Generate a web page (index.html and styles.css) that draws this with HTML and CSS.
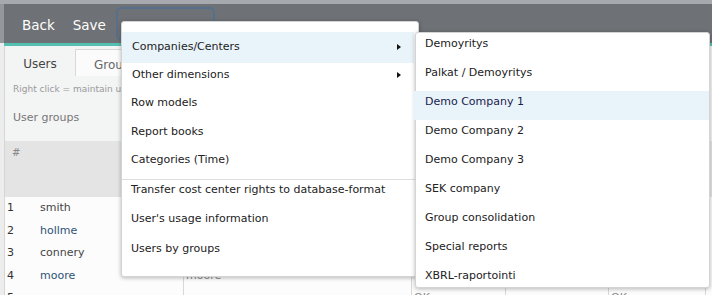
FILE: index.html
```html
<!DOCTYPE html>
<html>
<head>
<meta charset="utf-8">
<link rel="stylesheet" href="styles.css">
</head>
<body>
<div class="strip"></div>
<div class="frame">
  <header class="topbar">
    <button class="tb-btn">Back</button>
    <button class="tb-btn">Save</button>
    <button class="tb-btn tb-focus">Reports</button>
  </header>
  <div class="accent"></div>
  <main class="content">
    <nav class="tabs">
      <div class="tab">Users</div>
      <div class="tab tab-active">Groups</div>
    </nav>
    <p class="hint">Right click = maintain user rights</p>
    <h2 class="section">User groups</h2>
    <div class="grid">
      <div class="grid-head"><span class="hash">#</span></div>
      <div class="row"><span class="c-num">1</span><span class="c-name">smith</span><span class="c-2"></span><span class="c-3"></span><span class="c-4"></span><span class="c-5"></span></div>
      <div class="row"><span class="c-num">2</span><span class="c-name link">hollme</span><span class="c-2"></span><span class="c-3"></span><span class="c-4"></span><span class="c-5"></span></div>
      <div class="row"><span class="c-num">3</span><span class="c-name">connery</span><span class="c-2"></span><span class="c-3"></span><span class="c-4"></span><span class="c-5"></span></div>
      <div class="row"><span class="c-num">4</span><span class="c-name link">moore</span><span class="c-2 ghost">moore</span><span class="c-3"></span><span class="c-4"></span><span class="c-5"></span></div>
      <div class="row"><span class="c-num">5</span><span class="c-name"></span><span class="c-2"></span><span class="c-3 ghost">OK</span><span class="c-4"></span><span class="c-5 ghost">OK</span></div>
    </div>
  </main>
</div>

<ul class="menu menu-main">
  <li class="mi mi-sub mi-hover">Companies/Centers<span class="arrow"></span></li>
  <li class="mi mi-sub">Other dimensions<span class="arrow"></span></li>
  <li class="mi">Row models</li>
  <li class="mi">Report books</li>
  <li class="mi">Categories (Time)</li>
  <li class="sep"></li>
  <li class="mi mi-b">Transfer cost center rights to database-format</li>
  <li class="mi mi-b">User's usage information</li>
  <li class="mi mi-b">Users by groups</li>
</ul>

<ul class="menu menu-sub">
  <li class="si">Demoyritys</li>
  <li class="si">Palkat / Demoyritys</li>
  <li class="si si-hover">Demo Company 1</li>
  <li class="si">Demo Company 2</li>
  <li class="si">Demo Company 3</li>
  <li class="si">SEK company</li>
  <li class="si">Group consolidation</li>
  <li class="si">Special reports</li>
  <li class="si">XBRL-raportointi</li>
</ul>
</body>
</html>
```
FILE: styles.css
```css
html, body {
  margin: 0;
  padding: 0;
  height: 100%;
  overflow: hidden;
}
body {
  background: linear-gradient(#94989c 0, #94989c 43px, #ededed 43px);
  font-family: "DejaVu Sans", Verdana, sans-serif;
  font-size: 11px;
  color: #222;
  display: flex;
  flex-direction: column;
}
.strip {
  flex-shrink: 0;
  height: 4px;
  background: #a6aaae;
}
.frame {
  flex: 1;
  min-height: 0;
  margin-left: 4px;
  display: flex;
  flex-direction: column;
  background: #f3f4f4;
  overflow: hidden;
}
.topbar {
  flex-shrink: 0;
  height: 39px;
  background: #6e7175;
  display: flex;
  align-items: center;
  padding-left: 9px;
}
.tb-btn {
  font-family: "DejaVu Sans", Verdana, sans-serif;
  font-size: 13.5px;
  color: #fff;
  background: none;
  border: none;
  padding: 3px 9px 0;
  height: 33px;
  line-height: 30px;
}
.tb-focus {
  margin-left: 1px;
  width: 99px;
  border: 2px solid #56708c;
  border-radius: 5px;
  color: #dfe3e7;
  text-align: left;
  line-height: 16px;
  padding-top: 10px;
}
.accent {
  flex-shrink: 0;
  height: 3px;
  background: #55c0b2;
}
.content {
  flex: 1;
  min-height: 0;
  border-left: 1px solid #d6d6d6;
  display: flex;
  flex-direction: column;
}
.tabs {
  flex-shrink: 0;
  display: flex;
  margin-top: 3px;
  height: 27px;
}
.tab {
  width: 70px;
  text-align: center;
  line-height: 30px;
  font-size: 12px;
  color: #444;
}
.tab-active {
  background: #fbfbfb;
  border: 1px solid #d8d8d8;
  border-bottom: none;
  width: 86px;
  text-align: left;
  padding-left: 18px;
  box-sizing: border-box;
  color: #666;
}
.hint {
  flex-shrink: 0;
  margin: 7px 0 0 8px;
  font-size: 9px;
  color: #9a9a9a;
  line-height: 12px;
}
.section {
  flex-shrink: 0;
  margin: 16px 0 0 8px;
  font-size: 11px;
  font-weight: normal;
  color: #777;
  line-height: 14px;
}
.grid {
  flex-shrink: 0;
  margin-top: 16px;
  background: #fcfcfc;
}
.grid-head {
  height: 56px;
  background: #e4e4e4;
  padding: 5px 0 0 7px;
  box-sizing: border-box;
}
.hash {
  color: #888;
  font-size: 10px;
}
.row {
  display: grid;
  grid-template-columns: 35px 143px 228px 94px 103px 98px;
  height: 22.5px;
  line-height: 21px;
}
.row span {
  display: block;
  height: 100%;
  overflow: hidden;
}
.c-num {
  padding-left: 2px;
  color: #333;
}
.c-name {
  color: #444;
}
.link {
  color: #2e5376;
}
.c-2, .c-3, .c-4, .c-5 {
  border-left: 1px solid #d8d8d8;
  padding-left: 2px;
}
.ghost {
  color: #888;
}
.c-5 {
  border-right: 1px solid #d8d8d8;
}

.menu {
  position: absolute;
  margin: 0;
  list-style: none;
  background: #fff;
  border: 1px solid #d4d4d4;
  border-radius: 3px;
  box-shadow: 0 1px 4px rgba(0, 0, 0, 0.28);
  box-sizing: border-box;
}
.menu-main {
  left: 121px;
  top: 21px;
  width: 298px;
  height: 256px;
  padding: 10px 0 0 0;
}
.mi {
  position: relative;
  height: 28.5px;
  line-height: 28.5px;
  padding-left: 9px;
  margin-right: 4px;
  color: #222;
  white-space: nowrap;
}
.mi-sub {
  padding-left: 10px;
}
.mi-hover {
  background: #e9f4fa;
  height: 31px;
  line-height: 30px;
  margin-bottom: -2.5px;
}
.mi-b {
  height: 29.5px;
  line-height: 19px;
}
.sep {
  height: 0;
  border-top: 1px solid #dedede;
  margin: 4px 0 0 0;
}
.arrow {
  position: absolute;
  right: 13px;
  top: 50%;
  margin-top: -3px;
  width: 0;
  height: 0;
  border-top: 3px solid transparent;
  border-bottom: 3px solid transparent;
  border-left: 4px solid #111;
}
.mi-hover .arrow {
  margin-top: -3.5px;
}
.menu-sub {
  left: 415px;
  top: 32px;
  width: 295px;
  height: 256px;
  padding: 0;
}
.si {
  height: 29px;
  line-height: 22px;
  padding-left: 9px;
  color: #222;
}
.si-hover {
  background: #e9f4fa;
  color: #1b1b4d;
  margin-left: -3px;
  padding-left: 12px;
}
```
